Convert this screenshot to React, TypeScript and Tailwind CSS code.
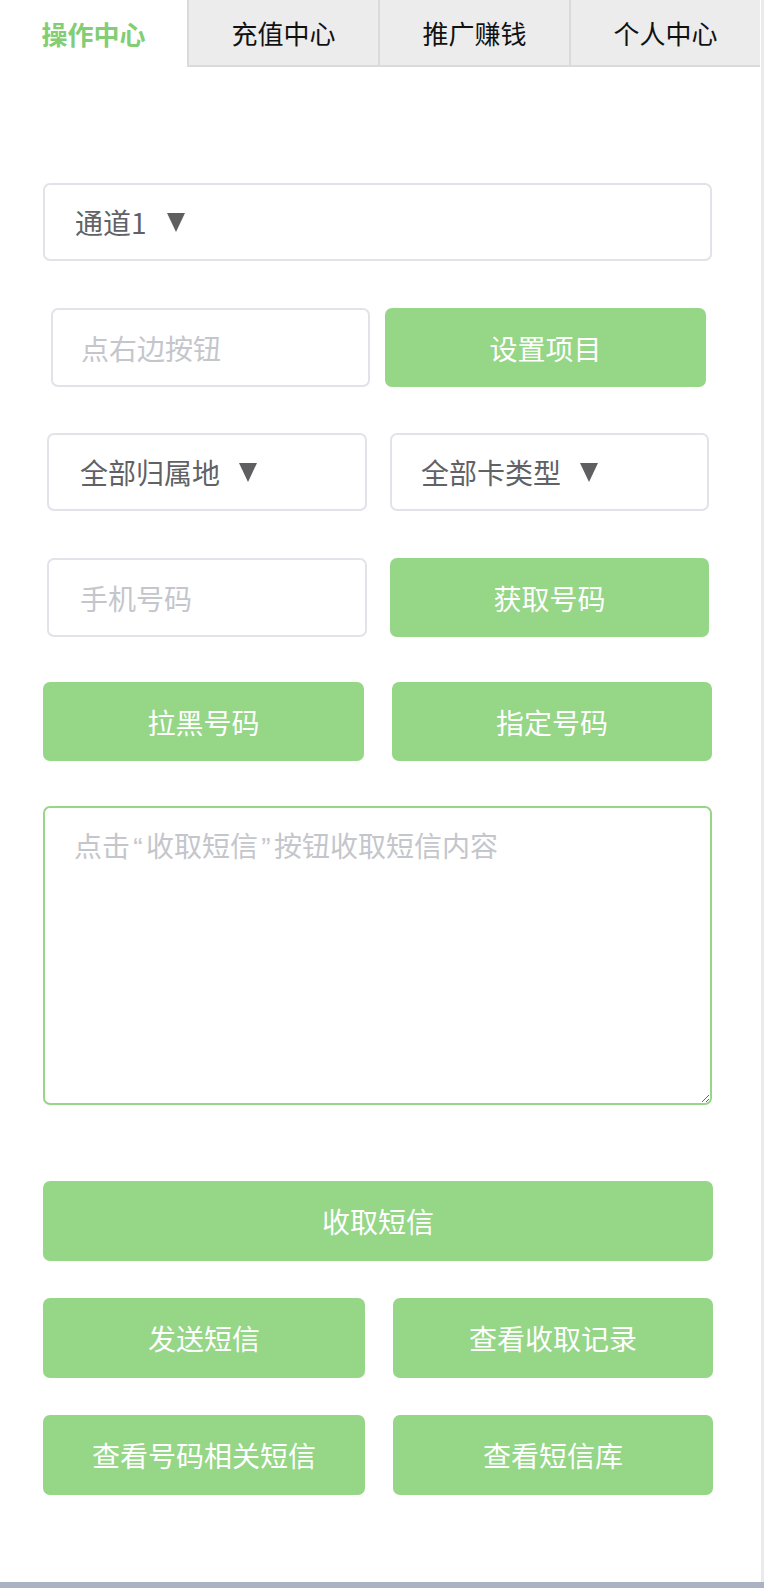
import React, { useState } from "react";

const tabs = ["操作中心", "充值中心", "推广赚钱", "个人中心"];

const Arrow: React.FC = () => (
  <svg width="18" height="20" viewBox="0 0 18 20" className="shrink-0">
    <polygon points="0,1 18,1 9,20" fill="#5f5f61" />
  </svg>
);

const SelectBox: React.FC<{ label: string; className: string; gap: string }> = ({ label, className, gap }) => (
  <div className={`flex items-center border-2 border-[#e2e2e8] rounded-[7px] bg-white text-[#606266] ${className}`}>
    <span>{label}</span>
    <span className={gap}>
      <Arrow />
    </span>
  </div>
);

const GreenButton: React.FC<{ label: string; className: string }> = ({ label, className }) => (
  <button className={`flex items-center justify-center rounded-[7px] bg-[#95d687] text-white ${className}`}>
    {label}
  </button>
);

const Quote: React.FC<{ ch: string }> = ({ ch }) => (
  <span className="inline-block w-[16px] text-center font-['Liberation_Sans',sans-serif]">{ch}</span>
);

const App: React.FC = () => {
  const [active, setActive] = useState(0);
  const [phone, setPhone] = useState("");
  const [project, setProject] = useState("");
  const [sms, setSms] = useState("");

  return (
    <div className="w-[764px] h-[1588px] flex flex-col bg-[#e9e9ee] font-['Noto_Sans_CJK_SC',sans-serif] overflow-hidden">
      <div className="w-[761px] h-[1582px] bg-white flex flex-col">
        {/* tabs */}
        <div className="flex h-[67px] shrink-0">
          {tabs.map((t, i) =>
            i === active ? (
              <div
                key={t}
                onClick={() => setActive(i)}
                className="w-[187px] flex items-center justify-center bg-white text-[26px] font-semibold text-[#83cd74] cursor-pointer"
              >
                {t}
              </div>
            ) : (
              <div
                key={t}
                onClick={() => setActive(i)}
                className="w-[191px] flex items-center justify-center bg-[#ececec] border-l-2 border-b-2 border-[#dadada] text-[26px] text-[#111] cursor-pointer"
              >
                {t}
              </div>
            )
          )}
        </div>

        <div className="flex flex-col pl-[43px] text-[28px]">
          <SelectBox label="通道1" className="mt-[116px] w-[669px] h-[78px] pl-[30px]" gap="ml-[20px]" />

          <div className="flex mt-[47px] pl-[8px] gap-[15px]">
            <input
              value={project}
              onChange={(e) => setProject(e.target.value)}
              placeholder="点右边按钮"
              className="w-[319px] h-[79px] border-2 border-[#e2e2e8] rounded-[7px] pl-[28px] outline-none text-[#606266] placeholder:text-[#c4c6cc]"
            />
            <GreenButton label="设置项目" className="w-[321px] h-[79px]" />
          </div>

          <div className="flex mt-[46px] pl-[4px] gap-[23px]">
            <SelectBox label="全部归属地" className="w-[320px] h-[78px] pl-[31px]" gap="ml-[19px]" />
            <SelectBox label="全部卡类型" className="w-[319px] h-[78px] pl-[29px]" gap="ml-[19px]" />
          </div>

          <div className="flex mt-[47px] pl-[4px] gap-[23px]">
            <input
              value={phone}
              onChange={(e) => setPhone(e.target.value)}
              placeholder="手机号码"
              className="w-[320px] h-[79px] border-2 border-[#e2e2e8] rounded-[7px] pl-[31px] outline-none text-[#606266] placeholder:text-[#c4c6cc]"
            />
            <GreenButton label="获取号码" className="w-[319px] h-[79px]" />
          </div>

          <div className="flex mt-[45px] gap-[28px]">
            <GreenButton label="拉黑号码" className="w-[321px] h-[79px]" />
            <GreenButton label="指定号码" className="w-[320px] h-[79px]" />
          </div>

          <div className="relative mt-[45px] w-[669px] h-[299px]">
            <textarea
              value={sms}
              onChange={(e) => setSms(e.target.value)}
              className="w-[669px] h-[299px] border-2 border-[#95d687] rounded-[7px] pl-[29px] pt-[16px] leading-[42px] outline-none text-[#606266]"
            />
            {sms === "" && (
              <div className="absolute left-[31px] top-[18px] leading-[42px] text-[#c4c6cc] pointer-events-none whitespace-nowrap">
                点击<Quote ch="“" />收取短信<Quote ch="”" />按钮收取短信内容
              </div>
            )}
          </div>

          <GreenButton label="收取短信" className="mt-[76px] w-[670px] h-[80px]" />

          <div className="flex mt-[37px] gap-[28px]">
            <GreenButton label="发送短信" className="w-[322px] h-[80px]" />
            <GreenButton label="查看收取记录" className="w-[320px] h-[80px]" />
          </div>

          <div className="flex mt-[37px] gap-[28px]">
            <GreenButton label="查看号码相关短信" className="w-[322px] h-[80px]" />
            <GreenButton label="查看短信库" className="w-[320px] h-[80px]" />
          </div>
        </div>
      </div>
      <div className="h-[6px] bg-[#a9b3c3]" />
    </div>
  );
};

export default App;
